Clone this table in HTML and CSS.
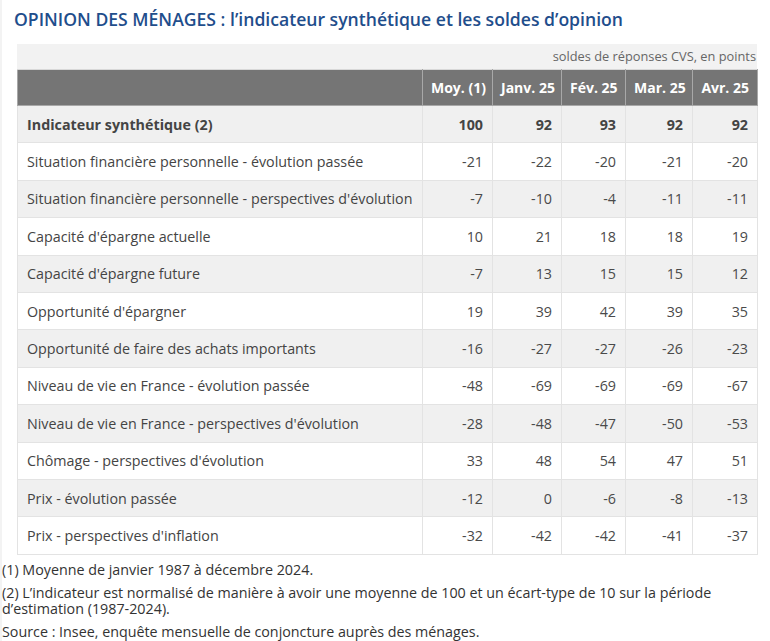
FILE: index.html
```html
<!DOCTYPE html>
<html lang="fr">
<head>
<meta charset="utf-8">
<title>Opinion des ménages</title>
<link rel="stylesheet" href="styles.css">
</head>
<body>
<div class="page">
  <h1 class="title">OPINION DES MÉNAGES : l’indicateur synthétique et les soldes d’opinion</h1>
  <div class="table-wrap">
    <div class="unit">soldes de réponses CVS, en points</div>
    <table class="data">
      <colgroup>
        <col class="c-label"><col class="c-moy"><col class="c-jan"><col class="c-feb"><col class="c-mar"><col class="c-apr">
      </colgroup>
      <thead>
        <tr><th></th><th>Moy. (1)</th><th>Janv. 25</th><th>Fév. 25</th><th>Mar. 25</th><th>Avr. 25</th></tr>
      </thead>
      <tbody>
        <tr class="strong"><td>Indicateur synthétique (2)</td><td>100</td><td>92</td><td>93</td><td>92</td><td>92</td></tr>
        <tr><td>Situation financière personnelle - évolution passée</td><td>-21</td><td>-22</td><td>-20</td><td>-21</td><td>-20</td></tr>
        <tr><td>Situation financière personnelle - perspectives d'évolution</td><td>-7</td><td>-10</td><td>-4</td><td>-11</td><td>-11</td></tr>
        <tr><td>Capacité d'épargne actuelle</td><td>10</td><td>21</td><td>18</td><td>18</td><td>19</td></tr>
        <tr><td>Capacité d'épargne future</td><td>-7</td><td>13</td><td>15</td><td>15</td><td>12</td></tr>
        <tr><td>Opportunité d'épargner</td><td>19</td><td>39</td><td>42</td><td>39</td><td>35</td></tr>
        <tr><td>Opportunité de faire des achats importants</td><td>-16</td><td>-27</td><td>-27</td><td>-26</td><td>-23</td></tr>
        <tr><td>Niveau de vie en France - évolution passée</td><td>-48</td><td>-69</td><td>-69</td><td>-69</td><td>-67</td></tr>
        <tr><td>Niveau de vie en France - perspectives d'évolution</td><td>-28</td><td>-48</td><td>-47</td><td>-50</td><td>-53</td></tr>
        <tr><td>Chômage - perspectives d'évolution</td><td>33</td><td>48</td><td>54</td><td>47</td><td>51</td></tr>
        <tr><td>Prix - évolution passée</td><td>-12</td><td>0</td><td>-6</td><td>-8</td><td>-13</td></tr>
        <tr><td>Prix - perspectives d'inflation</td><td>-32</td><td>-42</td><td>-42</td><td>-41</td><td>-37</td></tr>
      </tbody>
    </table>
  </div>
  <div class="notes">
    <p>(1) Moyenne de janvier 1987 à décembre 2024.</p>
    <p>(2) L’indicateur est normalisé de manière à avoir une moyenne de 100 et un écart-type de 10 sur la période d’estimation (1987-2024).</p>
    <p>Source : Insee, enquête mensuelle de conjoncture auprès des ménages.</p>
  </div>
</div>
</body>
</html>
```
FILE: styles.css
```css
html, body {
  margin: 0;
  padding: 0;
  background: #ffffff;
}
body {
  font-family: "Open Sans", "Liberation Sans", sans-serif;
  color: #444;
}
.page {
  border-left: 2px solid #f3f3f3;
  min-height: 641px;
  box-sizing: border-box;
}
.title {
  margin: 0;
  padding: 6px 0 0 12px;
  font-size: 17.6px;
  line-height: 26px;
  font-weight: 600;
  color: #1f4e8c;
  height: 39px;
  box-sizing: border-box;
  white-space: nowrap;
}
.table-wrap {
  margin: 5px 0 0 15px;
  width: 740px;
}
.unit {
  background: #f2f2f2;
  text-align: right;
  font-size: 12.8px;
  line-height: 25px;
  height: 25px;
  color: #666;
  padding-right: 1px;
}
.data {
  border-collapse: collapse;
  table-layout: fixed;
  width: 740px;
  font-size: 14.3px;
}
.c-label { width: 405px; }
.c-moy { width: 70px; }
.c-jan { width: 69px; }
.c-feb { width: 64px; }
.c-mar { width: 67px; }
.c-apr { width: 65px; }
.data th {
  background: #757575;
  color: #fff;
  font-size: 14px;
  font-weight: 700;
  height: 36px;
  padding: 0 8px 0 8px;
  text-align: right;
  border: 1px solid #a8a8a8;
  border-top-color: #d8d8d8;
  white-space: nowrap;
  box-sizing: border-box;
}
.data td {
  height: 37.4px;
  padding: 0 9px 0 10px;
  text-align: right;
  border: 1px solid #e3e3e3;
  color: #4a4a4a;
  box-sizing: border-box;
  white-space: nowrap;
}
.data td:first-child {
  text-align: left;
  padding-left: 9px;
  color: #444;
}
.data tbody tr:nth-child(odd) td {
  background: #f0f0f0;
}
.data tbody tr:nth-child(even) td {
  background: #ffffff;
}
.data tr.strong td {
  font-weight: 700;
  color: #444;
}
.notes {
  width: 750px;
  padding-top: 7px;
  font-size: 14.3px;
  line-height: 16px;
  color: #333;
}
.notes p {
  margin: 0 0 7px 0;
}
```
